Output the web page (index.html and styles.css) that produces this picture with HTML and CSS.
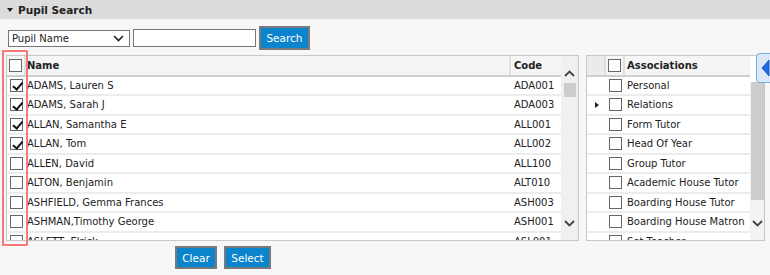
FILE: index.html
```html
<!DOCTYPE html>
<html>
<head>
<meta charset="utf-8">
<link rel="stylesheet" href="styles.css">
</head>
<body>
<div class="page">
  <div class="header"><span class="caret"></span>Pupil Search</div>
  <div class="content">
    <div class="search-row">
      <div class="select"><span>Pupil Name</span><svg class="chev" width="11" height="7" viewBox="0 0 11 7"><path d="M1 1l4.5 4.5L10 1" fill="none" stroke="#222" stroke-width="1.6"/></svg></div>
      <div class="input"></div>
      <div class="btn search-btn">Search</div>
    </div>
    <div class="panels">
      <div class="panel pupils">
        <div class="grid">
          <div class="row head">
            <div class="cell chk"><span class="box"></span></div>
            <div class="cell name">Name</div>
            <div class="cell code">Code</div>
          </div>
          <div class="row"><div class="cell chk"><span class="box on"></span></div><div class="cell name">ADAMS, Lauren S</div><div class="cell code">ADA001</div></div>
          <div class="row"><div class="cell chk"><span class="box on"></span></div><div class="cell name">ADAMS, Sarah J</div><div class="cell code">ADA003</div></div>
          <div class="row"><div class="cell chk"><span class="box on"></span></div><div class="cell name">ALLAN, Samantha E</div><div class="cell code">ALL001</div></div>
          <div class="row"><div class="cell chk"><span class="box on"></span></div><div class="cell name">ALLAN, Tom</div><div class="cell code">ALL002</div></div>
          <div class="row"><div class="cell chk"><span class="box"></span></div><div class="cell name">ALLEN, David</div><div class="cell code">ALL100</div></div>
          <div class="row"><div class="cell chk"><span class="box"></span></div><div class="cell name">ALTON, Benjamin</div><div class="cell code">ALT010</div></div>
          <div class="row"><div class="cell chk"><span class="box"></span></div><div class="cell name">ASHFIELD, Gemma Frances</div><div class="cell code">ASH003</div></div>
          <div class="row"><div class="cell chk"><span class="box"></span></div><div class="cell name">ASHMAN,Timothy George</div><div class="cell code">ASH001</div></div>
          <div class="row"><div class="cell chk"><span class="box"></span></div><div class="cell name">ASLETT, Elrick</div><div class="cell code">ASL001</div></div>
        </div>
        <div class="scrollbar">
          <svg class="sarrow" width="11" height="7" viewBox="0 0 11 7"><path d="M1 6l4.5-4.5L10 6" fill="none" stroke="#444" stroke-width="1.8"/></svg>
          <div class="thumb small"></div>
          <div class="spacer"></div>
          <svg class="sarrow" width="11" height="7" viewBox="0 0 11 7"><path d="M1 1l4.5 4.5L10 1" fill="none" stroke="#444" stroke-width="1.8"/></svg>
        </div>
      </div>
      <div class="panel assoc">
        <div class="grid">
          <div class="row head">
            <div class="cell exp"></div>
            <div class="cell chk"><span class="box"></span></div>
            <div class="cell label">Associations</div>
          </div>
          <div class="row"><div class="cell exp"></div><div class="cell chk"><span class="box"></span></div><div class="cell label">Personal</div></div>
          <div class="row"><div class="cell exp"><span class="tri"></span></div><div class="cell chk"><span class="box"></span></div><div class="cell label">Relations</div></div>
          <div class="row"><div class="cell exp"></div><div class="cell chk"><span class="box"></span></div><div class="cell label">Form Tutor</div></div>
          <div class="row"><div class="cell exp"></div><div class="cell chk"><span class="box"></span></div><div class="cell label">Head Of Year</div></div>
          <div class="row"><div class="cell exp"></div><div class="cell chk"><span class="box"></span></div><div class="cell label">Group Tutor</div></div>
          <div class="row"><div class="cell exp"></div><div class="cell chk"><span class="box"></span></div><div class="cell label">Academic House Tutor</div></div>
          <div class="row"><div class="cell exp"></div><div class="cell chk"><span class="box"></span></div><div class="cell label">Boarding House Tutor</div></div>
          <div class="row"><div class="cell exp"></div><div class="cell chk"><span class="box"></span></div><div class="cell label">Boarding House Matron</div></div>
          <div class="row"><div class="cell exp"></div><div class="cell chk"><span class="box"></span></div><div class="cell label">Set Teacher</div></div>
        </div>
        <div class="scrollbar narrow">
          <div class="grip"></div>
          <div class="thumb big"></div>
          <div class="spacer"></div>
          <svg class="sarrow" width="11" height="7" viewBox="0 0 11 7"><path d="M1 1l4.5 4.5L10 1" fill="none" stroke="#444" stroke-width="1.8"/></svg>
        </div>
      </div>
    </div>
    <div class="actions">
      <div class="btn clear-btn">Clear</div>
      <div class="btn select-btn">Select</div>
    </div>
  </div>
  <div class="annot"></div>
  <div class="tab"><svg width="9" height="18" viewBox="0 0 9 18"><path d="M8 1L1 9l7 8z" fill="#1c6be0" stroke="#1450b8" stroke-width="0.8"/></svg></div>
</div>
</body>
</html>
```

FILE: styles.css
```css
* { box-sizing: border-box; }
html, body { margin: 0; padding: 0; }
body {
  width: 770px;
  height: 275px;
  overflow: hidden;
  background: #f7f7f7;
  font-family: "DejaVu Sans", Verdana, sans-serif;
  font-size: 10px;
  color: #222;
}
.page { position: relative; width: 770px; height: 275px; }
.header {
  height: 19px;
  background: #dcdcdc;
  display: flex;
  align-items: center;
  padding-left: 7px;
  font-weight: bold;
  font-size: 10.5px;
  color: #222;
}
.caret {
  width: 0; height: 0;
  border-left: 3.5px solid transparent;
  border-right: 3.5px solid transparent;
  border-top: 4px solid #222;
  margin-right: 5px;
}
.content { padding: 0 0 0 6px; }
.search-row {
  display: flex;
  align-items: center;
  height: 37px;
  padding-top: 1px;
  padding-left: 2px;
}
.select {
  width: 122px;
  height: 17px;
  border: 1px solid #767676;
  background: #fff;
  display: flex;
  align-items: center;
  justify-content: space-between;
  padding: 0 5px 0 3px;
}
.input {
  width: 123px;
  height: 18px;
  margin-left: 3px;
  border: 1px solid #767676;
  background: #fff;
}
.btn {
  background: #0a84cc;
  color: #fff;
  border: 2px solid #7a7a7a;
  height: 24px;
  display: flex;
  align-items: center;
  justify-content: center;
  font-size: 10.5px;
}
.search-btn { width: 51px; margin-left: 3px; }
.panels { display: flex; gap: 7px; height: 186px; margin-top: -1px; }
.panel {
  border: 1px solid #c8c8c8;
  background: #f0f0f0;
  display: flex;
  overflow: hidden;
  height: 186px;
}
.pupils { width: 573px; }
.assoc { width: 179px; }
.grid { flex: 1; overflow: hidden; background: #fff; }
.row {
  display: flex;
  height: 19.5px;
  border-bottom: 2px solid #ececec;
  background: #fff;
}
.row.head {
  background: #f5f5f5;
  border-bottom: 2px solid #cfcfcf;
  height: 20.5px;
  font-weight: bold;
}
.cell { display: flex; align-items: center; white-space: nowrap; }
.head .cell { border-right: 2px solid #e0e0e0; }
.pupils .chk { width: 19px; justify-content: center; }
.pupils .name { width: 485px; padding-left: 1px; }
.pupils .code { width: 50px; padding-left: 3px; }
.head .code { border-right: none; }
.assoc .exp { width: 19px; justify-content: center; }
.assoc .head .exp { background: #ebebeb; }
.assoc .chk { width: 19px; justify-content: center; }
.assoc .label { flex: 1; padding-left: 2px; border-right: none; }
.box {
  width: 13px; height: 13px;
  border: 1px solid #666;
  background: #fff;
  position: relative;
}
.box.on::after {
  content: "";
  position: absolute;
  left: 3.5px; top: 0.5px;
  width: 3.5px; height: 7.5px;
  border: solid #111;
  border-width: 0 2px 2px 0;
  transform: rotate(40deg);
}
.tri {
  width: 0; height: 0;
  border-top: 3.5px solid transparent;
  border-bottom: 3.5px solid transparent;
  border-left: 4px solid #222;
}
.scrollbar {
  width: 17px;
  background: #f0f0f0;
  display: flex;
  flex-direction: column;
  align-items: center;
  padding-top: 14px;
  padding-bottom: 13px;
}
.sarrow { flex: none; }
.thumb { background: #cdcdcd; width: 12px; }
.thumb.small { height: 14px; margin-top: 6px; }
.spacer { flex: 1; }
.scrollbar.narrow { width: 14px; padding-top: 0; background: #f3f3f3; }
.grip { height: 26px; width: 100%; background: #fff; }
.thumb.big { height: 118px; width: 13px; }
.actions {
  display: flex;
  gap: 7px;
  padding-left: 169px;
  padding-top: 5px;
}
.actions .btn { height: 23px; }
.clear-btn { width: 42px; }
.select-btn { width: 47px; }
.annot {
  position: absolute;
  left: 2px; top: 50px;
  width: 26px; height: 196px;
  border: 2px solid #f47a7a;
  border-radius: 1px;
}
.tab {
  position: absolute;
  left: 756px; top: 53px;
  width: 16px; height: 30px;
  background: #dde9fa;
  border: 1px solid #7fa8e6;
  border-radius: 4px 0 0 4px;
  display: flex;
  align-items: center;
  justify-content: center;
  padding-left: 2px;
}
```
